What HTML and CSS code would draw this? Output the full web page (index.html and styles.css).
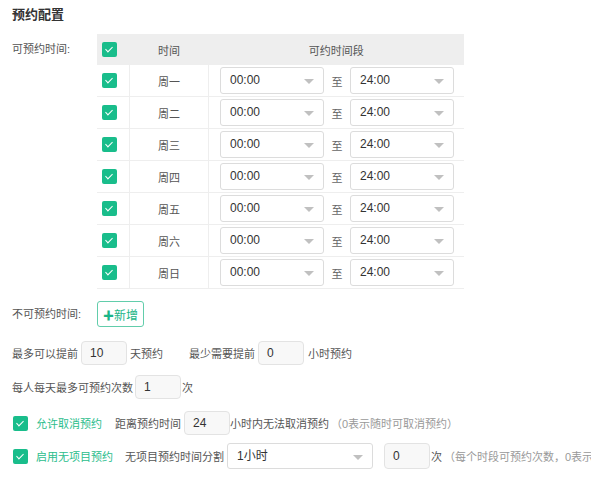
FILE: index.html
```html
<!DOCTYPE html>
<html lang="zh">
<head>
    <meta charset="UTF-8">
    <title>预约配置</title>
    <link rel="stylesheet" href="styles.css">
</head>
<body>
    <div class="page">
        <h3 class="title">预约配置</h3>

        <div class="field">
            <div class="label">可预约时间:</div>
            <table class="week">
                <thead>
                    <tr>
                        <th class="c-check"><span class="check"></span></th>
                        <th class="c-day">时间</th>
                        <th class="c-range">可约时间段</th>
                    </tr>
                </thead>
                <tbody id="weekRows"></tbody>
            </table>
        </div>

        <div class="field field-add">
            <div class="label">不可预约时间:</div>
            <button class="btn-add"><b>✚</b>新增</button>
        </div>

        <div class="line line-advance">
            <span>最多可以提前</span>
            <span class="input">10</span>
            <span class="unit">天预约</span>
            <span class="spaced">最少需要提前</span>
            <span class="input">0</span>
            <span class="unit">小时预约</span>
        </div>

        <div class="line line-times">
            <span>每人每天最多可预约次数</span>
            <span class="input">1</span>
            <span>次</span>
        </div>

        <div class="line line-cancel">
            <span class="check"></span>
            <span class="green">允许取消预约</span>
            <span class="sub">距离预约时间</span>
            <span class="input">24</span>
            <span>小时内无法取消预约</span>
            <span class="hint">（0表示随时可取消预约）</span>
        </div>

        <div class="line line-free">
            <span class="check"></span>
            <span class="green">启用无项目预约</span>
            <span class="sub">无项目预约时间分割</span>
            <span class="select select-wide">1小时</span>
            <span class="input input-gap">0</span>
            <span>次</span>
            <span class="hint">（每个时段可预约次数，0表示不限制）</span>
        </div>
    </div>

    <script>
        const days = ["周一", "周二", "周三", "周四", "周五", "周六", "周日"];
        const rows = document.getElementById("weekRows");

        days.forEach(day => {
            const tr = document.createElement("tr");
            tr.innerHTML = `
                <td class="c-check"><span class="check"></span></td>
                <td class="c-day">${day}</td>
                <td class="c-range">
                    <div class="range">
                        <span class="select">00:00</span>
                        <span class="to">至</span>
                        <span class="select">24:00</span>
                    </div>
                </td>`;
            rows.appendChild(tr);
        });
    </script>
</body>
</html>
```

FILE: styles.css
```css
body {
    margin: 0;
    font-family: "Liberation Sans", "Noto Sans CJK SC", sans-serif;
    font-size: 11px;
    color: #555;
    background: #fff;
    overflow: hidden;
}

.page {
    padding: 6px 0 0 12px;
    white-space: nowrap;
}

.title {
    margin: 0 0 10px 0;
    font-size: 13px;
    font-weight: bold;
    color: #333;
    line-height: 18px;
}

.field {
    display: flex;
    align-items: flex-start;
}

.field .label {
    width: 85px;
    line-height: 31px;
    flex-shrink: 0;
}

.week {
    border-collapse: collapse;
    width: 367px;
}

.week th {
    background: #eeeeee;
    font-weight: normal;
    color: #555;
    height: 31px;
    padding: 0;
}

.week td {
    height: 31px;
    padding: 0;
    border: 1px solid #eeeeee;
    text-align: center;
}

.week tr td:first-child {
    border-left: none;
}

.week tr td:last-child {
    border-right: none;
}

.week tbody tr:first-child td {
    border-top: none;
}

.c-check {
    width: 32px;
}

.c-day {
    width: 78px;
}

.week .c-check .check {
    margin-left: 5px;
}

.week td.c-check,
.week th.c-check {
    text-align: left;
}

.range {
    display: flex;
    align-items: center;
    padding-left: 11px;
}

.to {
    width: 26px;
    text-align: center;
    color: #666;
}

.check {
    display: inline-block;
    flex-shrink: 0;
    width: 15px;
    height: 15px;
    border-radius: 2px;
    background: #19bd8b;
    position: relative;
    vertical-align: middle;
}

.check::after {
    content: "";
    position: absolute;
    left: 5px;
    top: 3px;
    width: 3px;
    height: 6px;
    border: solid #fff;
    border-width: 0 1px 1px 0;
    transform: rotate(45deg);
}

.select {
    display: inline-block;
    flex-shrink: 0;
    box-sizing: border-box;
    width: 104px;
    height: 27px;
    line-height: 25px;
    border: 1px solid #dcdcdc;
    border-radius: 3px;
    padding-left: 9px;
    color: #333;
    font-size: 12px;
    text-align: left;
    position: relative;
    background: #fff;
}

.select::after {
    content: "";
    position: absolute;
    right: 9px;
    top: 11px;
    border-left: 5px solid transparent;
    border-right: 5px solid transparent;
    border-top: 5px solid #c0c0c0;
}

.select-wide {
    width: 146px;
    height: 26px;
    line-height: 24px;
}

.field-add {
    margin-top: 12px;
}

.field-add .label {
    line-height: 26px;
}

.btn-add {
    box-sizing: border-box;
    height: 26px;
    width: 47px;
    padding: 0;
    background: #fff;
    border: 1px solid #62cdab;
    border-radius: 3px;
    color: #19b587;
    font-family: inherit;
    font-size: 12px;
    cursor: pointer;
}

.btn-add b {
    font-size: 11px;
}

.line {
    display: flex;
    align-items: center;
}

.line > span {
    flex-shrink: 0;
}

.line-advance {
    margin-top: 14px;
}

.line-times {
    margin-top: 10px;
}

.line-cancel {
    margin-top: 12px;
}

.line-free {
    margin-top: 8px;
}

.input {
    display: inline-block;
    box-sizing: border-box;
    width: 46px;
    height: 24px;
    line-height: 22px;
    border: 1px solid #e3e3e3;
    border-radius: 4px;
    background: #f8f8f8;
    padding-left: 8px;
    color: #333;
    font-size: 12px;
    margin: 0 3px;
}

.spaced {
    margin-left: 26px;
}

.line-advance .spaced + .input {
    margin-right: 4px;
}

.line-times .input {
    margin: 0 1px 0 2px;
}

.line .check {
    margin: 0 8px 0 1px;
}

.green {
    color: #2bbd8c;
}

.line-cancel .sub {
    margin-left: 13px;
}

.line-free .sub {
    margin-left: 12px;
}

.line-free .select {
    margin-left: 3px;
}

.line-cancel .input {
    margin: 0 0 0 3px;
}

.line-free .input-gap {
    margin: 0 1px 0 11px;
    height: 26px;
    line-height: 24px;
}

.hint {
    color: #999;
    margin-left: 2px;
}
```
